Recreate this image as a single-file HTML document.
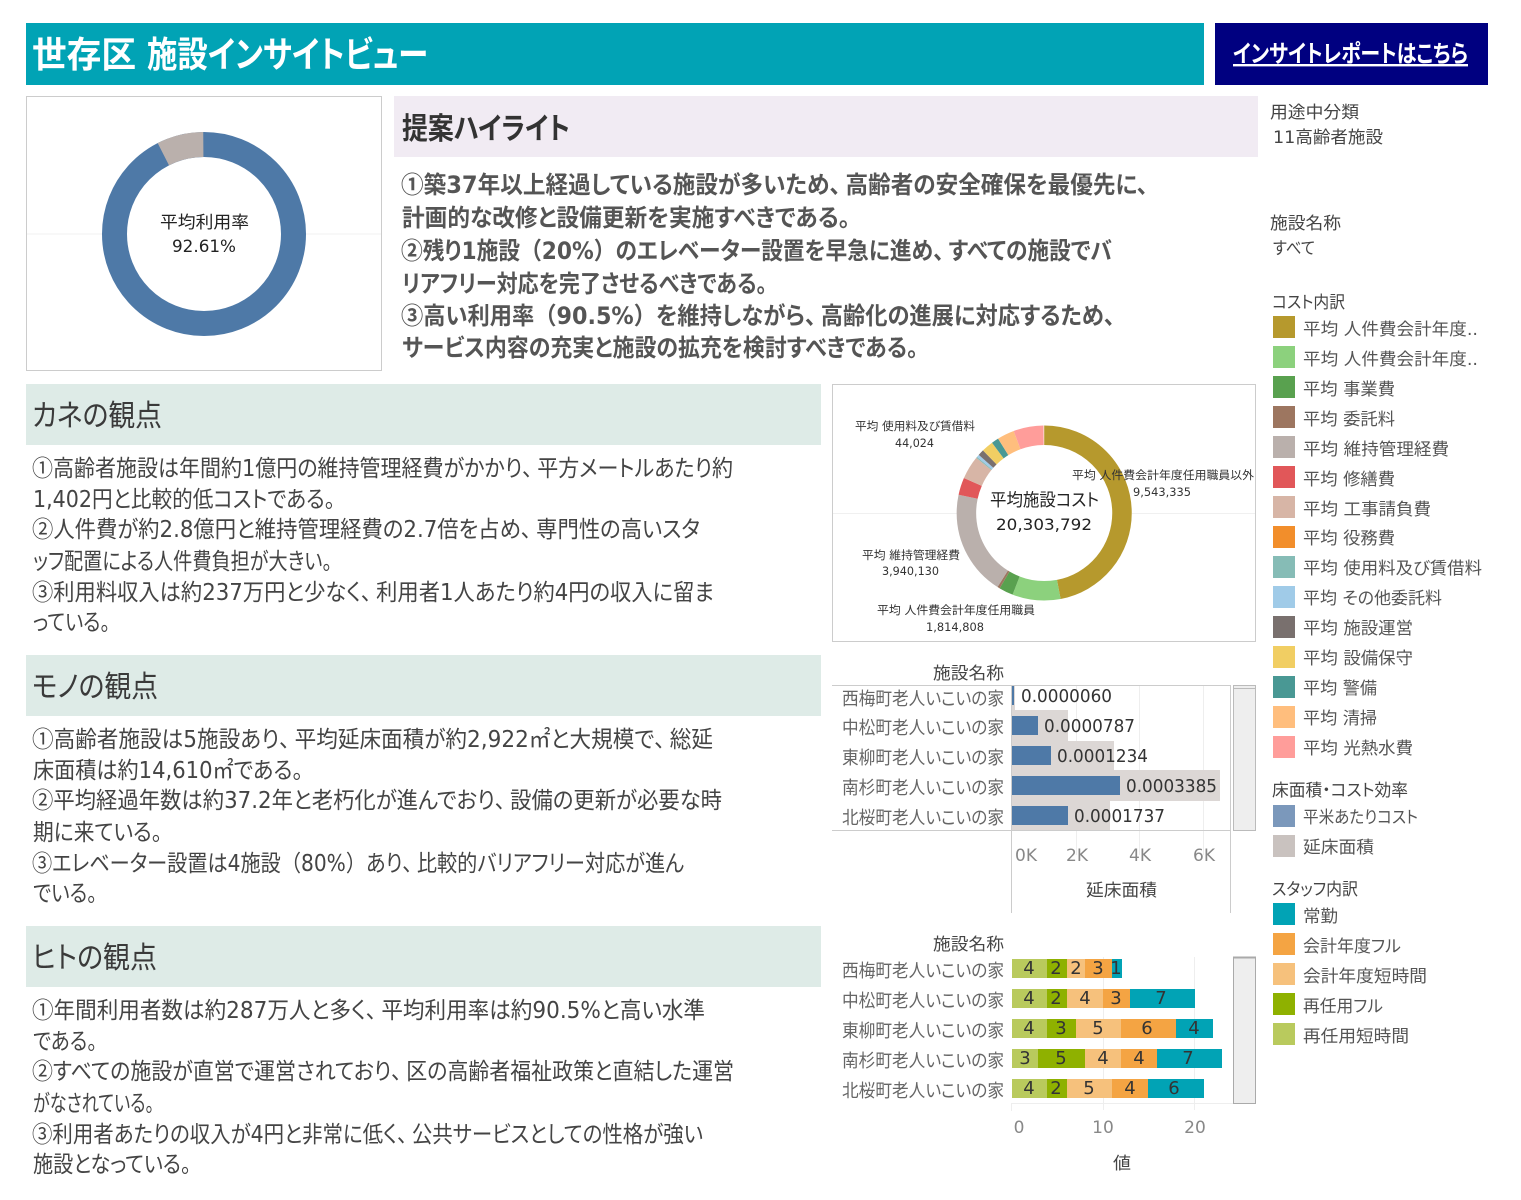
<!DOCTYPE html>
<html lang="ja"><head><meta charset="utf-8"><title>世存区 施設インサイトビュー</title>
<style>
html,body{margin:0;padding:0;background:#fff;width:1521px;height:1200px;overflow:hidden}
svg{display:block;font-family:"DejaVu Sans","Noto Sans CJK JP",sans-serif;font-feature-settings:"palt" 1}
.c{font-family:"Noto Sans CJK JP",sans-serif}
.q{font-family:"Noto Sans CJK JP",sans-serif;font-feature-settings:normal}
.k{letter-spacing:5px}
.b{font-size:23px;fill:#444}
.p{font-size:24px;font-weight:700;fill:#555}
.h{font-size:30px;fill:#3a3a3a}
.l{font-size:18px;fill:#666}
.lg{font-size:17px;fill:#555}
.t{font-size:17px;fill:#444}
.s{font-size:11.5px;fill:#333}
.v{font-size:18px;fill:#333}
.a{font-size:17px;fill:#888}
.n{font-size:18px;fill:#333;text-anchor:middle}
</style></head><body>
<svg xmlns="http://www.w3.org/2000/svg" width="1521" height="1200" viewBox="0 0 1521 1200">
<rect x="26" y="23" width="1178" height="62" fill="#01a3b5"/>
<text x="32" y="67" font-size="36" font-weight="700" fill="#fff" textLength="104" lengthAdjust="spacingAndGlyphs">世存区</text>
<text x="147" y="67" font-size="36" font-weight="700" fill="#fff" textLength="281" lengthAdjust="spacingAndGlyphs">施設インサイトビュー</text>
<rect x="1215" y="23" width="273" height="62" fill="#000080"/>
<a href="#"><text x="1233" y="62" font-size="24" font-weight="700" fill="#fff" text-decoration="underline" textLength="235" lengthAdjust="spacingAndGlyphs">インサイトレポートはこちら</text></a>

<!-- Utilisation donut -->
<rect x="26.5" y="96.5" width="355" height="274" fill="#fff" stroke="#ccc"/>
<path d="M27 234H102M306 234H381" stroke="#f0f0f0"/>
<circle cx="204" cy="234" r="89.5" fill="none" stroke="#4e79a7" stroke-width="25"/>
<circle cx="204" cy="234" r="89.5" fill="none" stroke="#bab0ac" stroke-width="25" pathLength="360" stroke-dasharray="26.6 360" stroke-dashoffset="-333.4" transform="rotate(-90 204 234)"/>
<text x="160" y="228" font-size="17" fill="#222" textLength="89" lengthAdjust="spacingAndGlyphs">平均利用率</text>
<text x="172" y="252" font-size="17" fill="#222" textLength="64" lengthAdjust="spacingAndGlyphs">92.61%</text>

<!-- Proposal -->
<rect x="394" y="96" width="864" height="61" fill="#f1ebf3"/>
<text x="402" y="139" font-size="30" font-weight="700" fill="#333" textLength="168" lengthAdjust="spacingAndGlyphs">提案ハイライト</text>
<text class="p" x="401" y="193" textLength="747" lengthAdjust="spacingAndGlyphs"><tspan class="c">①</tspan>築37年以上経過している施設が多いため<tspan class="k">、</tspan>高齢者の安全確保を最優先に、</text>
<text class="p" x="402" y="226" textLength="448" lengthAdjust="spacingAndGlyphs">計画的な改修と設備更新を実施すべきである。</text>
<text class="p" x="401" y="259" textLength="711" lengthAdjust="spacingAndGlyphs"><tspan class="c">②</tspan>残り1施設<tspan class="q">（</tspan>20%<tspan class="q">）</tspan>のエレベーター設置を早急に進め<tspan class="k">、</tspan>すべての施設でバ</text>
<text class="p" x="402" y="292" textLength="365" lengthAdjust="spacingAndGlyphs">リアフリー対応を完了させるべきである。</text>
<text class="p" x="401" y="324" textLength="714" lengthAdjust="spacingAndGlyphs"><tspan class="c">③</tspan>高い利用率<tspan class="q">（</tspan>90.5%<tspan class="q">）</tspan>を維持しながら<tspan class="k">、</tspan>高齢化の進展に対応するため、</text>
<text class="p" x="402" y="356" textLength="516" lengthAdjust="spacingAndGlyphs">サービス内容の充実と施設の拡充を検討すべきである。</text>

<!-- Kane -->
<rect x="26" y="384" width="795" height="61" fill="#deebe7"/>
<text class="h" x="32" y="426" textLength="130" lengthAdjust="spacingAndGlyphs">カネの観点</text>
<text class="b" x="32" y="476" textLength="701" lengthAdjust="spacingAndGlyphs"><tspan class="c">①</tspan>高齢者施設は年間約1億円の維持管理経費がかかり<tspan class="k">、</tspan>平方メートルあたり約</text>
<text class="b" x="33" y="507" textLength="302" lengthAdjust="spacingAndGlyphs">1,402円と比較的低コストである。</text>
<text class="b" x="32" y="537" textLength="668" lengthAdjust="spacingAndGlyphs"><tspan class="c">②</tspan>人件費が約2.8億円と維持管理経費の2.7倍を占め<tspan class="k">、</tspan>専門性の高いスタ</text>
<text class="b" x="33" y="569" textLength="299" lengthAdjust="spacingAndGlyphs">ッフ配置による人件費負担が大きい。</text>
<text class="b" x="32" y="600" textLength="682" lengthAdjust="spacingAndGlyphs"><tspan class="c">③</tspan>利用料収入は約237万円と少なく<tspan class="k">、</tspan>利用者1人あたり約4円の収入に留ま</text>
<text class="b" x="33" y="630" textLength="77" lengthAdjust="spacingAndGlyphs">っている。</text>

<!-- Mono -->
<rect x="26" y="655" width="795" height="61" fill="#deebe7"/>
<text class="h" x="32" y="697" textLength="126" lengthAdjust="spacingAndGlyphs">モノの観点</text>
<text class="b" x="32" y="747" textLength="681" lengthAdjust="spacingAndGlyphs"><tspan class="c">①</tspan>高齢者施設は5施設あり<tspan class="k">、</tspan>平均延床面積が約2,922<tspan class="q">㎡</tspan>と大規模で<tspan class="k">、</tspan>総延</text>
<text class="b" x="33" y="778" textLength="270" lengthAdjust="spacingAndGlyphs">床面積は約14,610<tspan class="q">㎡</tspan>である。</text>
<text class="b" x="32" y="808" textLength="690" lengthAdjust="spacingAndGlyphs"><tspan class="c">②</tspan>平均経過年数は約37.2年と老朽化が進んでおり<tspan class="k">、</tspan>設備の更新が必要な時</text>
<text class="b" x="33" y="840" textLength="129" lengthAdjust="spacingAndGlyphs">期に来ている。</text>
<text class="b" x="32" y="871" textLength="652" lengthAdjust="spacingAndGlyphs"><tspan class="c">③</tspan>エレベーター設置は4施設<tspan class="q">（</tspan>80%<tspan class="q">）</tspan>あり<tspan class="k">、</tspan>比較的バリアフリー対応が進ん</text>
<text class="b" x="33" y="901" textLength="64" lengthAdjust="spacingAndGlyphs">でいる。</text>

<!-- Hito -->
<rect x="26" y="926" width="795" height="61" fill="#deebe7"/>
<text class="h" x="32" y="968" textLength="125" lengthAdjust="spacingAndGlyphs">ヒトの観点</text>
<text class="b" x="32" y="1018" textLength="673" lengthAdjust="spacingAndGlyphs"><tspan class="c">①</tspan>年間利用者数は約287万人と多く<tspan class="k">、</tspan>平均利用率は約90.5%と高い水準</text>
<text class="b" x="33" y="1049" textLength="64" lengthAdjust="spacingAndGlyphs">である。</text>
<text class="b" x="32" y="1079" textLength="702" lengthAdjust="spacingAndGlyphs"><tspan class="c">②</tspan>すべての施設が直営で運営されており<tspan class="k">、</tspan>区の高齢者福祉政策と直結した運営</text>
<text class="b" x="33" y="1111" textLength="121" lengthAdjust="spacingAndGlyphs">がなされている。</text>
<text class="b" x="32" y="1142" textLength="671" lengthAdjust="spacingAndGlyphs"><tspan class="c">③</tspan>利用者あたりの収入が4円と非常に低く<tspan class="k">、</tspan>公共サービスとしての性格が強い</text>
<text class="b" x="33" y="1172" textLength="158" lengthAdjust="spacingAndGlyphs">施設となっている。</text>

<!-- Cost donut -->
<rect x="832.5" y="384.5" width="423" height="257" fill="#fff" stroke="#ccc"/>
<path d="M833 513.5H957M1132 513.5H1255" stroke="#f0f0f0"/>
<g fill="none" stroke-width="19.5" transform="rotate(-90 1044.2 513)">
<circle cx="1044.2" cy="513" r="77.8" stroke="#b6992d" pathLength="360" stroke-dasharray="169.4 360"/>
<circle cx="1044.2" cy="513" r="77.8" stroke="#8cd17d" pathLength="360" stroke-dasharray="32 360" stroke-dashoffset="-169.4"/>
<circle cx="1044.2" cy="513" r="77.8" stroke="#59a14f" pathLength="360" stroke-dasharray="9.5 360" stroke-dashoffset="-201.4"/>
<circle cx="1044.2" cy="513" r="77.8" stroke="#9d7660" pathLength="360" stroke-dasharray="1.6 360" stroke-dashoffset="-210.9"/>
<circle cx="1044.2" cy="513" r="77.8" stroke="#bab0ac" pathLength="360" stroke-dasharray="69.9 360" stroke-dashoffset="-212.5"/>
<circle cx="1044.2" cy="513" r="77.8" stroke="#e15759" pathLength="360" stroke-dasharray="11.5 360" stroke-dashoffset="-282.4"/>
<circle cx="1044.2" cy="513" r="77.8" stroke="#d7b5a6" pathLength="360" stroke-dasharray="15.6 360" stroke-dashoffset="-293.9"/>
<circle cx="1044.2" cy="513" r="77.8" stroke="#86bcb6" pathLength="360" stroke-dasharray=".8 360" stroke-dashoffset="-309.5"/>
<circle cx="1044.2" cy="513" r="77.8" stroke="#a0cbe8" pathLength="360" stroke-dasharray="1.7 360" stroke-dashoffset="-310.3"/>
<circle cx="1044.2" cy="513" r="77.8" stroke="#79706e" pathLength="360" stroke-dasharray="4 360" stroke-dashoffset="-312"/>
<circle cx="1044.2" cy="513" r="77.8" stroke="#f1ce63" pathLength="360" stroke-dasharray="7.8 360" stroke-dashoffset="-316"/>
<circle cx="1044.2" cy="513" r="77.8" stroke="#499894" pathLength="360" stroke-dasharray="4.8 360" stroke-dashoffset="-323.8"/>
<circle cx="1044.2" cy="513" r="77.8" stroke="#ffbe7d" pathLength="360" stroke-dasharray="11.4 360" stroke-dashoffset="-328.6"/>
<circle cx="1044.2" cy="513" r="77.8" stroke="#ff9d9a" pathLength="360" stroke-dasharray="20 360" stroke-dashoffset="-340"/>
</g>
<text x="990" y="506" font-size="17.5" fill="#222" textLength="109" lengthAdjust="spacingAndGlyphs">平均施設コスト</text>
<text x="996" y="530" font-size="16" fill="#222" textLength="96" lengthAdjust="spacingAndGlyphs">20,303,792</text>
<text class="s" x="855" y="430" textLength="120" lengthAdjust="spacingAndGlyphs">平均 使用料及び賃借料</text>
<text class="s" x="895" y="447" textLength="39" lengthAdjust="spacingAndGlyphs">44,024</text>
<text class="s" x="1072" y="479" textLength="182" lengthAdjust="spacingAndGlyphs">平均 人件費会計年度任用職員以外</text>
<text class="s" x="1133" y="496" textLength="58" lengthAdjust="spacingAndGlyphs">9,543,335</text>
<text class="s" x="862" y="559" textLength="98" lengthAdjust="spacingAndGlyphs">平均 維持管理経費</text>
<text class="s" x="882" y="575" textLength="57" lengthAdjust="spacingAndGlyphs">3,940,130</text>
<text class="s" x="877" y="614" textLength="158" lengthAdjust="spacingAndGlyphs">平均 人件費会計年度任用職員</text>
<text class="s" x="926" y="631" textLength="58" lengthAdjust="spacingAndGlyphs">1,814,808</text>

<!-- Floor area chart -->
<path d="M1076.5 686V855M1139.5 686V855M1203.5 686V855" stroke="#eee"/>
<rect x="1012" y="686" width="3" height="24" fill="#dcd7d5"/>
<rect x="1012" y="710" width="56" height="31" fill="#dcd7d5"/>
<rect x="1012" y="741" width="102" height="30" fill="#dcd7d5"/>
<rect x="1012" y="770" width="208" height="31" fill="#dcd7d5"/>
<rect x="1012" y="801" width="98" height="29" fill="#dcd7d5"/>
<g fill="#4e79a7">
<rect x="1012" y="686" width="2" height="19"/>
<rect x="1012" y="716" width="26" height="19"/>
<rect x="1012" y="746" width="39" height="19"/>
<rect x="1012" y="776" width="108" height="19"/>
<rect x="1012" y="806" width="56" height="19"/>
</g>
<path d="M832 685.5H1230.5M832 830.5H1230.5M1011.5 685V913M1230.5 685V913" stroke="#ccc" fill="none"/>
<text class="t" x="933" y="679" textLength="71" lengthAdjust="spacingAndGlyphs">施設名称</text>
<text class="l" x="842" y="705" textLength="162" lengthAdjust="spacingAndGlyphs">西梅町老人いこいの家</text>
<text class="l" x="842" y="734" textLength="162" lengthAdjust="spacingAndGlyphs">中松町老人いこいの家</text>
<text class="l" x="842" y="764" textLength="162" lengthAdjust="spacingAndGlyphs">東柳町老人いこいの家</text>
<text class="l" x="842" y="794" textLength="162" lengthAdjust="spacingAndGlyphs">南杉町老人いこいの家</text>
<text class="l" x="842" y="824" textLength="162" lengthAdjust="spacingAndGlyphs">北桜町老人いこいの家</text>
<text class="v" x="1021" y="702" textLength="91" lengthAdjust="spacingAndGlyphs">0.0000060</text>
<text class="v" x="1044" y="732" textLength="91" lengthAdjust="spacingAndGlyphs">0.0000787</text>
<text class="v" x="1057" y="762" textLength="91" lengthAdjust="spacingAndGlyphs">0.0001234</text>
<text class="v" x="1126" y="792" textLength="91" lengthAdjust="spacingAndGlyphs">0.0003385</text>
<text class="v" x="1074" y="822" textLength="91" lengthAdjust="spacingAndGlyphs">0.0001737</text>
<text class="a" x="1015" y="861" textLength="22" lengthAdjust="spacingAndGlyphs">0K</text>
<text class="a" x="1066" y="861" textLength="22" lengthAdjust="spacingAndGlyphs">2K</text>
<text class="a" x="1129" y="861" textLength="22" lengthAdjust="spacingAndGlyphs">4K</text>
<text class="a" x="1193" y="861" textLength="22" lengthAdjust="spacingAndGlyphs">6K</text>
<text class="t" x="1086" y="896" textLength="71" lengthAdjust="spacingAndGlyphs">延床面積</text>
<rect x="1233.5" y="685.5" width="22" height="145" fill="#eee" stroke="#bbb"/>
<path d="M1234 688.5H1255" stroke="#bbb"/>

<!-- Staff chart -->
<path d="M1103.5 957V1110M1194.5 957V1110M1011.5 1103V1111M1012 1103.5H1233" stroke="#eee" fill="none"/>
<text class="t" x="933" y="950" textLength="71" lengthAdjust="spacingAndGlyphs">施設名称</text>
<text class="l" x="842" y="977" textLength="162" lengthAdjust="spacingAndGlyphs">西梅町老人いこいの家</text>
<text class="l" x="842" y="1007" textLength="162" lengthAdjust="spacingAndGlyphs">中松町老人いこいの家</text>
<text class="l" x="842" y="1037" textLength="162" lengthAdjust="spacingAndGlyphs">東柳町老人いこいの家</text>
<text class="l" x="842" y="1067" textLength="162" lengthAdjust="spacingAndGlyphs">南杉町老人いこいの家</text>
<text class="l" x="842" y="1097" textLength="162" lengthAdjust="spacingAndGlyphs">北桜町老人いこいの家</text>
<rect x="1012" y="959" width="35" height="19" fill="#b9ca5d"/><rect x="1047" y="959" width="20" height="19" fill="#8fb100"/><rect x="1067" y="959" width="18" height="19" fill="#f6c17c"/><rect x="1085" y="959" width="27" height="19" fill="#f4a443"/><rect x="1112" y="959" width="10" height="19" fill="#01a3b5"/>
<rect x="1012" y="989" width="35" height="19" fill="#b9ca5d"/><rect x="1047" y="989" width="20" height="19" fill="#8fb100"/><rect x="1067" y="989" width="36" height="19" fill="#f6c17c"/><rect x="1103" y="989" width="27" height="19" fill="#f4a443"/><rect x="1130" y="989" width="65" height="19" fill="#01a3b5"/>
<rect x="1012" y="1019" width="35" height="19" fill="#b9ca5d"/><rect x="1047" y="1019" width="29" height="19" fill="#8fb100"/><rect x="1076" y="1019" width="45" height="19" fill="#f6c17c"/><rect x="1121" y="1019" width="55" height="19" fill="#f4a443"/><rect x="1176" y="1019" width="37" height="19" fill="#01a3b5"/>
<rect x="1012" y="1049" width="26" height="19" fill="#b9ca5d"/><rect x="1038" y="1049" width="47" height="19" fill="#8fb100"/><rect x="1085" y="1049" width="36" height="19" fill="#f6c17c"/><rect x="1121" y="1049" width="36" height="19" fill="#f4a443"/><rect x="1157" y="1049" width="65" height="19" fill="#01a3b5"/>
<rect x="1012" y="1079" width="35" height="19" fill="#b9ca5d"/><rect x="1047" y="1079" width="20" height="19" fill="#8fb100"/><rect x="1067" y="1079" width="45" height="19" fill="#f6c17c"/><rect x="1112" y="1079" width="36" height="19" fill="#f4a443"/><rect x="1148" y="1079" width="56" height="19" fill="#01a3b5"/>
<text class="n" x="1029" y="974">4</text><text class="n" x="1056" y="974">2</text><text class="n" x="1076" y="974">2</text><text class="n" x="1098" y="974">3</text><text class="n" x="1116" y="974">1</text>
<text class="n" x="1029" y="1004">4</text><text class="n" x="1056" y="1004">2</text><text class="n" x="1085" y="1004">4</text><text class="n" x="1116" y="1004">3</text><text class="n" x="1161" y="1004">7</text>
<text class="n" x="1029" y="1034">4</text><text class="n" x="1061" y="1034">3</text><text class="n" x="1098" y="1034">5</text><text class="n" x="1147" y="1034">6</text><text class="n" x="1194" y="1034">4</text>
<text class="n" x="1025" y="1064">3</text><text class="n" x="1061" y="1064">5</text><text class="n" x="1103" y="1064">4</text><text class="n" x="1139" y="1064">4</text><text class="n" x="1188" y="1064">7</text>
<text class="n" x="1029" y="1094">4</text><text class="n" x="1056" y="1094">2</text><text class="n" x="1089" y="1094">5</text><text class="n" x="1130" y="1094">4</text><text class="n" x="1174" y="1094">6</text>
<text class="a" x="1019" y="1133" text-anchor="middle">0</text>
<text class="a" x="1103" y="1133" text-anchor="middle">10</text>
<text class="a" x="1195" y="1133" text-anchor="middle">20</text>
<text class="t" x="1113" y="1169" textLength="18" lengthAdjust="spacingAndGlyphs">値</text>
<rect x="1233.5" y="957" width="22" height="146.5" fill="#eee" stroke="#aaa"/>
<path d="M1233 957.5H1256" stroke="#aaa" stroke-width="2"/>

<!-- Right legend -->
<text class="t" x="1270" y="118" textLength="89" lengthAdjust="spacingAndGlyphs">用途中分類</text>
<text class="t" x="1273" y="143" textLength="110" lengthAdjust="spacingAndGlyphs">11高齢者施設</text>
<text class="t" x="1270" y="229" textLength="71" lengthAdjust="spacingAndGlyphs">施設名称</text>
<text class="t" x="1273" y="254" textLength="42" lengthAdjust="spacingAndGlyphs">すべて</text>
<text class="t" x="1272" y="308" textLength="73" lengthAdjust="spacingAndGlyphs">コスト内訳</text>
<rect x="1273" y="316" width="22" height="22" fill="#b6992d"/><text class="lg" x="1303" y="335" textLength="175" lengthAdjust="spacingAndGlyphs">平均 人件費会計年度..</text>
<rect x="1273" y="346" width="22" height="22" fill="#8cd17d"/><text class="lg" x="1303" y="365" textLength="175" lengthAdjust="spacingAndGlyphs">平均 人件費会計年度..</text>
<rect x="1273" y="376" width="22" height="22" fill="#59a14f"/><text class="lg" x="1303" y="395" textLength="92" lengthAdjust="spacingAndGlyphs">平均 事業費</text>
<rect x="1273" y="406" width="22" height="22" fill="#9d7660"/><text class="lg" x="1303" y="425" textLength="92" lengthAdjust="spacingAndGlyphs">平均 委託料</text>
<rect x="1273" y="436" width="22" height="22" fill="#bab0ac"/><text class="lg" x="1303" y="455" textLength="146" lengthAdjust="spacingAndGlyphs">平均 維持管理経費</text>
<rect x="1273" y="466" width="22" height="22" fill="#e15759"/><text class="lg" x="1303" y="485" textLength="92" lengthAdjust="spacingAndGlyphs">平均 修繕費</text>
<rect x="1273" y="496" width="22" height="22" fill="#d7b5a6"/><text class="lg" x="1303" y="515" textLength="128" lengthAdjust="spacingAndGlyphs">平均 工事請負費</text>
<rect x="1273" y="526" width="22" height="22" fill="#f28e2b"/><text class="lg" x="1303" y="544" textLength="92" lengthAdjust="spacingAndGlyphs">平均 役務費</text>
<rect x="1273" y="556" width="22" height="22" fill="#86bcb6"/><text class="lg" x="1303" y="574" textLength="179" lengthAdjust="spacingAndGlyphs">平均 使用料及び賃借料</text>
<rect x="1273" y="586" width="22" height="22" fill="#a0cbe8"/><text class="lg" x="1303" y="604" textLength="139" lengthAdjust="spacingAndGlyphs">平均 その他委託料</text>
<rect x="1273" y="616" width="22" height="22" fill="#79706e"/><text class="lg" x="1303" y="634" textLength="110" lengthAdjust="spacingAndGlyphs">平均 施設運営</text>
<rect x="1273" y="646" width="22" height="22" fill="#f1ce63"/><text class="lg" x="1303" y="664" textLength="110" lengthAdjust="spacingAndGlyphs">平均 設備保守</text>
<rect x="1273" y="676" width="22" height="22" fill="#499894"/><text class="lg" x="1303" y="694" textLength="74" lengthAdjust="spacingAndGlyphs">平均 警備</text>
<rect x="1273" y="706" width="22" height="22" fill="#ffbe7d"/><text class="lg" x="1303" y="724" textLength="74" lengthAdjust="spacingAndGlyphs">平均 清掃</text>
<rect x="1273" y="736" width="22" height="22" fill="#ff9d9a"/><text class="lg" x="1303" y="754" textLength="110" lengthAdjust="spacingAndGlyphs">平均 光熱水費</text>
<text class="t" x="1272" y="796" textLength="136" lengthAdjust="spacingAndGlyphs">床面積・コスト効率</text>
<rect x="1273" y="805" width="22" height="22" fill="#7b98bb"/><text class="lg" x="1303" y="823" textLength="115" lengthAdjust="spacingAndGlyphs">平米あたりコスト</text>
<rect x="1273" y="835" width="22" height="22" fill="#c9c2bf"/><text class="lg" x="1303" y="853" textLength="71" lengthAdjust="spacingAndGlyphs">延床面積</text>
<text class="t" x="1272" y="895" textLength="86" lengthAdjust="spacingAndGlyphs">スタッフ内訳</text>
<rect x="1273" y="903" width="22" height="22" fill="#01a3b5"/><text class="lg" x="1303" y="922" textLength="35" lengthAdjust="spacingAndGlyphs">常勤</text>
<rect x="1273" y="933" width="22" height="22" fill="#f4a443"/><text class="lg" x="1303" y="952" textLength="98" lengthAdjust="spacingAndGlyphs">会計年度フル</text>
<rect x="1273" y="963" width="22" height="22" fill="#f6c17c"/><text class="lg" x="1303" y="982" textLength="124" lengthAdjust="spacingAndGlyphs">会計年度短時間</text>
<rect x="1273" y="993" width="22" height="22" fill="#8fb100"/><text class="lg" x="1303" y="1012" textLength="80" lengthAdjust="spacingAndGlyphs">再任用フル</text>
<rect x="1273" y="1023" width="22" height="22" fill="#b9ca5d"/><text class="lg" x="1303" y="1042" textLength="106" lengthAdjust="spacingAndGlyphs">再任用短時間</text>
</svg>
</body></html>
